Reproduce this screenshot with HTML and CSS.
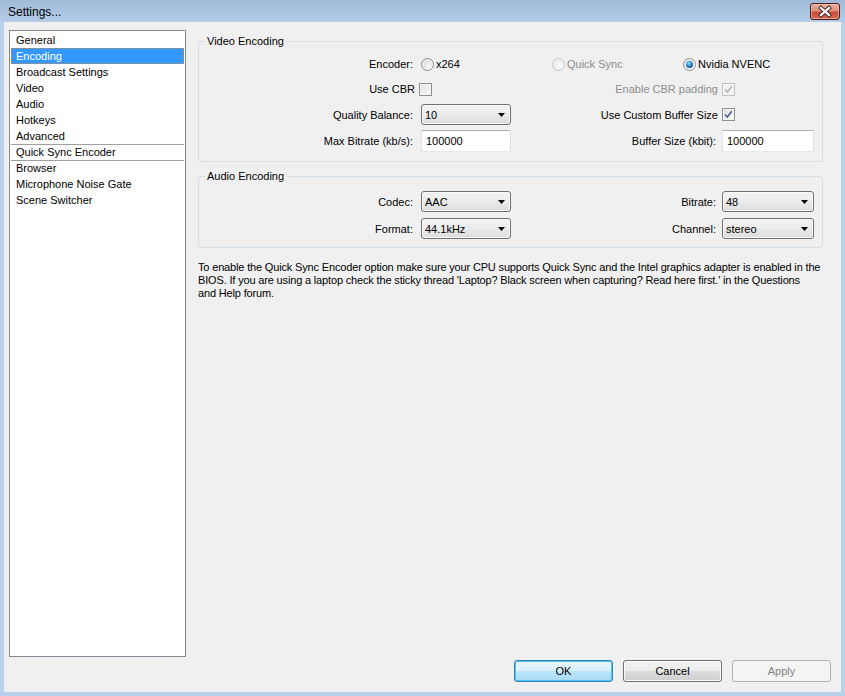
FILE: index.html
```html
<!DOCTYPE html>
<html>
<head>
<meta charset="utf-8">
<title>Settings...</title>
<link rel="stylesheet" href="styles.css">
</head>
<body>
<div class="window">
  <div class="titlebar">
    <span class="title">Settings...</span>
    <div class="close">
      <svg width="28" height="15" viewBox="0 0 28 15">
        <path d="M10 4 L18 11 M18 4 L10 11" stroke="#4a3030" stroke-width="4.2" stroke-linecap="square" fill="none"/>
        <path d="M10 4 L18 11 M18 4 L10 11" stroke="#ffffff" stroke-width="2.2" stroke-linecap="square" fill="none"/>
      </svg>
    </div>
  </div>
  <div class="client">
    <div class="main">
      <ul class="list">
        <li>General</li>
        <li class="sel">Encoding</li>
        <li>Broadcast Settings</li>
        <li>Video</li>
        <li>Audio</li>
        <li>Hotkeys</li>
        <li>Advanced</li>
        <li class="sep">Quick Sync Encoder</li>
        <li class="sep">Browser</li>
        <li>Microphone Noise Gate</li>
        <li>Scene Switcher</li>
      </ul>
      <div class="panel">
        <fieldset class="group video">
          <legend>Video Encoding</legend>
          <div class="grid vgrid">
            <div class="lab">Encoder:</div>
            <div class="radios">
              <span class="ritem"><span class="radio"></span>x264</span>
              <span class="ritem dis"><span class="radio"></span>Quick Sync</span>
              <span class="ritem"><span class="radio on"><span class="dot"></span></span>Nvidia NVENC</span>
            </div>

            <div class="lab ck">Use CBR</div>
            <div class="cell"><span class="check shift"></span></div>
            <div class="lab2 ck dis">Enable CBR padding</div>
            <div class="cell"><span class="check dis"><svg width="11" height="11" viewBox="0 0 11 11"><path d="M2 5.5 L4.3 8 L8.8 2.2" stroke="#b4b4b4" stroke-width="1.5" fill="none"/></svg></span></div>

            <div class="lab">Quality Balance:</div>
            <div class="combo"><span>10</span><svg width="7" height="4" viewBox="0 0 7 4"><path d="M0 0 H7 L3.5 4 Z" fill="#000"/></svg></div>
            <div class="lab2 ck">Use Custom Buffer Size</div>
            <div class="cell"><span class="check"><svg width="11" height="11" viewBox="0 0 11 11"><path d="M2 5.5 L4.3 8 L8.8 2.2" stroke="#4b5d93" stroke-width="1.6" fill="none"/></svg></span></div>

            <div class="lab">Max Bitrate (kb/s):</div>
            <div class="edit">100000</div>
            <div class="lab2">Buffer Size (kbit):</div>
            <div class="edit">100000</div>
          </div>
        </fieldset>

        <fieldset class="group audio">
          <legend>Audio Encoding</legend>
          <div class="grid agrid">
            <div class="lab">Codec:</div>
            <div class="combo"><span>AAC</span><svg width="7" height="4" viewBox="0 0 7 4"><path d="M0 0 H7 L3.5 4 Z" fill="#000"/></svg></div>
            <div class="lab2">Bitrate:</div>
            <div class="combo"><span>48</span><svg width="7" height="4" viewBox="0 0 7 4"><path d="M0 0 H7 L3.5 4 Z" fill="#000"/></svg></div>

            <div class="lab">Format:</div>
            <div class="combo"><span>44.1kHz</span><svg width="7" height="4" viewBox="0 0 7 4"><path d="M0 0 H7 L3.5 4 Z" fill="#000"/></svg></div>
            <div class="lab2">Channel:</div>
            <div class="combo"><span>stereo</span><svg width="7" height="4" viewBox="0 0 7 4"><path d="M0 0 H7 L3.5 4 Z" fill="#000"/></svg></div>
          </div>
        </fieldset>

        <p class="info">To enable the Quick Sync Encoder option make sure your CPU supports Quick Sync and the Intel graphics adapter is enabled in the<br>BIOS. If you are using a laptop check the sticky thread 'Laptop? Black screen when capturing? Read here first.' in the Questions<br>and Help forum.</p>
      </div>
    </div>
    <div class="buttons">
      <div class="btn default">OK</div>
      <div class="btn">Cancel</div>
      <div class="btn disabled">Apply</div>
    </div>
  </div>
</div>
</body>
</html>
```
FILE: styles.css
```css
html, body {
  margin: 0;
  padding: 0;
}
body {
  font-family: "Liberation Sans", Arial, sans-serif;
  font-size: 11px;
  color: #000;
}
.window {
  width: 845px;
  height: 696px;
  background: #b9d1ea;
  display: flex;
  flex-direction: column;
}
.titlebar {
  height: 22px;
  flex: none;
  display: flex;
  justify-content: space-between;
  align-items: flex-start;
  background: linear-gradient(#a0bad8, #b4cce7);
}
.title {
  font-size: 12px;
  line-height: 24px;
  padding-left: 8px;
}
.close {
  width: 30px;
  height: 17px;
  box-sizing: border-box;
  margin: 3px 5px 0 0;
  border: 1px solid #4b1d1d;
  border-radius: 3px;
  background: linear-gradient(#e9ae9c 0%, #dc927c 45%, #c94c35 55%, #d26b55 100%);
  box-shadow: inset 0 0 0 1px rgba(255, 210, 200, 0.5);
  display: flex;
}
.client {
  flex: 1;
  margin: 0 4px 4px;
  background: #f0f0f0;
  padding: 8px 10px 10px 5px;
  display: flex;
  flex-direction: column;
  box-sizing: border-box;
}
.main {
  display: flex;
  height: 627px;
  flex: none;
}
.list {
  width: 177px;
  height: 627px;
  box-sizing: border-box;
  border: 1px solid #828790;
  background: #fff;
  margin: 0;
  padding: 1px 0 0;
  list-style: none;
  flex: none;
}
.list li {
  height: 16px;
  line-height: 16px;
  margin: 0 1px;
  padding-left: 5px;
  box-sizing: border-box;
  white-space: nowrap;
}
.list li.sel {
  background: #3399ff;
  color: #fff;
  outline: 1px dotted #c9874a;
  outline-offset: -1px;
}
.list li.sep {
  border-top: 1px solid #a0a0a0;
  line-height: 15px;
}
.panel {
  margin-left: 12px;
  padding-top: 4px;
  width: 625px;
  flex: none;
}
.group {
  margin: 0;
  border: 1px solid #d5dfe5;
  border-radius: 3px;
  min-inline-size: 0;
  padding: 6px 8px 9px 0;
}
.group legend {
  margin-left: 6px;
  padding: 0 2px;
  line-height: 14px;
}
.audio {
  margin-top: 7px;
  padding-top: 8px;
  padding-bottom: 8px;
}
.grid {
  display: grid;
  grid-template-columns: 222px 90px 1fr 92px;
}
.vgrid {
  grid-template-rows: 20px 20px 21px 22px;
  row-gap: 5px;
}
.agrid {
  grid-template-rows: 21px 21px;
  row-gap: 6px;
}
.lab, .lab2 {
  display: flex;
  align-items: center;
  justify-content: flex-end;
  white-space: nowrap;
}
.lab { padding-right: 8px; }
.lab2 { padding-right: 6px; }
.lab.ck { padding-right: 6px; }
.lab2.ck { padding-right: 4px; }
.dis { color: #8d8d8d; }
.cell {
  display: flex;
  align-items: center;
}
.radios {
  grid-column: 2 / -1;
  display: flex;
  align-items: center;
}
.ritem {
  width: 131px;
  display: flex;
  align-items: center;
  gap: 2px;
  white-space: nowrap;
}
.radio {
  width: 13px;
  height: 13px;
  box-sizing: border-box;
  border: 1px solid #8e8f8f;
  border-radius: 50%;
  background: radial-gradient(circle at 65% 65%, #fdfdfd 0%, #e6e6e6 45%, #cfcfcf 100%);
  box-shadow: inset 0 0 0 1px #f4f4f4;
  display: flex;
  align-items: center;
  justify-content: center;
  flex: none;
}
.ritem.dis .radio {
  border-color: #c4c5c6;
  background: radial-gradient(circle at 65% 65%, #fbfbfb 0%, #ececec 60%, #e0e0e0 100%);
}
.dot {
  width: 7px;
  height: 7px;
  border-radius: 50%;
  background: radial-gradient(circle at 40% 35%, #9be6ff 0%, #3c9ad6 35%, #125489 70%, #0b3a63 100%);
}
.check {
  width: 13px;
  height: 13px;
  box-sizing: border-box;
  border: 1px solid #8e8f8f;
  background: linear-gradient(135deg, #dcdcdc 0%, #f0f0f0 60%, #fbfbfb 100%);
  box-shadow: inset 0 0 0 1px #f4f4f4;
  display: flex;
  align-items: center;
  justify-content: center;
}
.check.shift { margin-left: -2px; }
.check.dis {
  border-color: #c2c2c2;
  background: #f4f4f4;
}
.combo {
  height: 21px;
  box-sizing: border-box;
  border: 1px solid #707070;
  border-radius: 3px;
  background: linear-gradient(#f4f4f4 0%, #ebebeb 50%, #dcdcdc 100%);
  box-shadow: inset 0 0 0 1px #fbfbfb;
  padding: 1px 5px 0 3px;
  display: flex;
  align-items: center;
  justify-content: space-between;
}
.edit {
  height: 22px;
  box-sizing: border-box;
  border: 1px solid;
  border-color: #abadb3 #dbdfe6 #e3e9ef #e2e3ea;
  background: #fff;
  padding-left: 4px;
  display: flex;
  align-items: center;
}
.info {
  margin: 13px 0 0;
  line-height: 13px;
  letter-spacing: -0.16px;
  white-space: nowrap;
}
.buttons {
  display: flex;
  justify-content: flex-end;
  gap: 10px;
  margin-top: 3px;
}
.btn {
  width: 99px;
  height: 22px;
  box-sizing: border-box;
  border: 1px solid #707070;
  border-radius: 3px;
  background: linear-gradient(#f2f2f2 0%, #ebebeb 49%, #dddddd 50%, #cfcfcf 100%);
  box-shadow: inset 0 0 0 1px #fcfcfc;
  display: flex;
  align-items: center;
  justify-content: center;
}
.btn.default {
  border-color: #3c7fb1;
  background: linear-gradient(#eaf6fd 0%, #d9f0fc 49%, #bee6fd 50%, #a7d9f5 100%);
  box-shadow: inset 0 0 0 1px #48c6f7;
}
.btn.disabled {
  border-color: #adb2b5;
  background: #f4f4f4;
  color: #838383;
  box-shadow: none;
}
```
